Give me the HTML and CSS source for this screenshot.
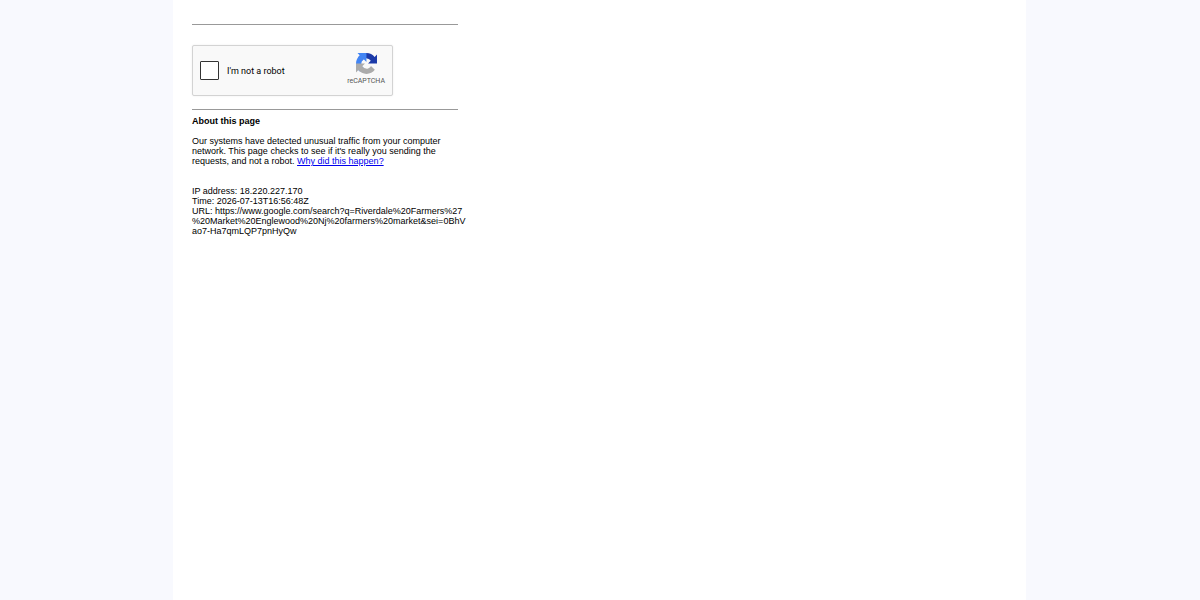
FILE: index.html
```html
<!DOCTYPE html>
<html lang="en">
<head>
<meta charset="UTF-8">
<meta name="viewport" content="width=device-width, initial-scale=1.0">
<title>About this page</title>
<link rel="stylesheet" href="styles.css">
</head>
<body>
<main class="page">
    <div class="content">
        <hr class="top-line">
        <form class="captcha">
            <input type="checkbox" id="robot" class="captcha-box">
            <label for="robot" class="captcha-label">I'm not a robot</label>
            <div class="captcha-brand">
                <svg class="captcha-logo" viewBox="0 0 64 64" aria-hidden="true">
                    <path fill="#1c3aa9" d="M64 31.955l-.033-1.37V4.687l-7.16 7.16C50.948 4.674 42.033.093 32.05.093c-10.4 0-19.622 4.96-25.458 12.64l11.736 11.86a15.55 15.55 0 0 1 4.754-5.334c2.05-1.6 4.952-2.906 8.968-2.906.485 0 .86.057 1.135.163 4.976.393 9.288 3.14 11.828 7.124l-8.307 8.307L64 31.953"/>
                    <path fill="#4285f4" d="M31.862.094l-1.37.033H4.594l7.16 7.16C4.58 13.147 0 22.06 0 32.046c0 10.4 4.96 19.622 12.64 25.458L24.5 45.768a15.55 15.55 0 0 1-5.334-4.754c-1.6-2.05-2.906-4.952-2.906-8.968 0-.485.057-.86.163-1.135.393-4.976 3.14-9.288 7.124-11.828l8.307 8.307L31.86.095"/>
                    <path fill="#ababab" d="M.001 32.045l.033 1.37v25.898l7.16-7.16c5.86 7.173 14.774 11.754 24.76 11.754 10.4 0 19.622-4.96 25.458-12.64l-11.736-11.86a15.55 15.55 0 0 1-4.754 5.334c-2.05 1.6-4.952 2.906-8.968 2.906-.485 0-.86-.057-1.135-.163-4.976-.393-9.288-3.14-11.828-7.124l8.307-8.307c-10.522.04-22.4.066-27.295-.005"/>
                </svg>
                <span class="captcha-name">reCAPTCHA</span>
            </div>
        </form>
        <hr>
        <h1>About this page</h1>
        <p>Our systems have detected unusual traffic from your computer network. This page checks to see if it's really you sending the requests, and not a robot. <a href="#">Why did this happen?</a></p>
        <p class="details">
            IP address: 18.220.227.170<br>
            Time: 2026-07-13T16:56:48Z<br>
            URL: https://www.google.com/search?q=Riverdale%20Farmers%27<wbr>%20Market%20Englewood%20Nj%20farmers%20market&amp;sei=0BhVao7-Ha7qmLQP7pnHyQw
        </p>
    </div>
</main>
</body>
</html>
```
FILE: styles.css
```css
body {
    margin: 0;
    padding: 0 174px 0 173px;
    background-color: #f8f9fe;
    color: #000;
    font-family: "Liberation Sans", Arial, sans-serif;
    font-size: 9px;
    line-height: 10px;
}

.page {
    min-height: 100vh;
    box-sizing: border-box;
    padding: 24px 19px;
    background-color: #fff;
}

.content {
    max-width: 276px;
}

hr {
    height: 1px;
    margin: 0 10px 0 0;
    border: none;
    background-color: #999;
}

.top-line {
    margin-bottom: 20px;
}

.captcha {
    display: flex;
    align-items: center;
    box-sizing: border-box;
    max-width: 201px;
    height: 51px;
    margin-bottom: 13px;
    padding: 0 7px;
    border: 1px solid #d3d3d3;
    border-radius: 2px;
    background-color: #f9f9f9;
    box-shadow: 0 0 2px rgba(0, 0, 0, 0.08);
    font-family: Roboto, sans-serif;
}

.captcha-box {
    appearance: none;
    box-sizing: border-box;
    width: 19px;
    height: 19px;
    margin: 0 8px 0 0;
    border: 1px solid #333;
    border-radius: 1px;
    background-color: #fff;
    cursor: pointer;
}

.captcha-box:checked {
    background-color: #4285f4;
}

.captcha-label {
    font-size: 9px;
}

.captcha-brand {
    display: flex;
    flex-direction: column;
    align-items: center;
    margin-left: auto;
    padding-bottom: 2px;
}

.captcha-logo {
    width: 21px;
    height: 21px;
    margin-bottom: 2px;
}

.captcha-name {
    color: #555;
    font-size: 7px;
}

h1 {
    margin: 6px 0 10px;
    font-size: 9px;
    line-height: 10px;
}

p {
    margin: 0;
}

a {
    color: #0000ee;
}

.details {
    margin-top: 20px;
    word-break: break-all;
}
```
